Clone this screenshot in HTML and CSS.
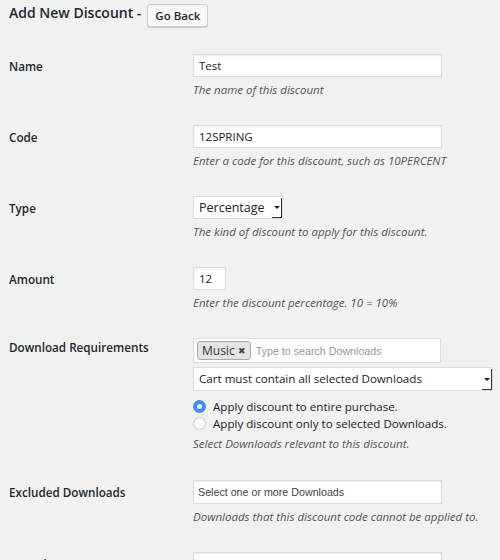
FILE: index.html
```html
<!DOCTYPE html>
<html lang="en">
  <head>
    <meta charset="UTF-8" />
    <meta name="viewport" content="width=device-width, initial-scale=1.0" />
    <title>Add New Discount</title>
    <link rel="stylesheet" href="styles.css">
  </head>
  <body>
    <div class="wrap">
      <div class="page-header">
        <h1>Add New Discount -</h1>
        <a class="button" href="#">Go Back</a>
      </div>

      <div class="form-table">
        <div class="row">
          <div class="label">Name</div>
          <div class="field">
            <div class="text-input">Test</div>
            <p class="description">The name of this discount</p>
          </div>
        </div>

        <div class="row">
          <div class="label">Code</div>
          <div class="field">
            <div class="text-input">12SPRING</div>
            <p class="description">Enter a code for this discount, such as 10PERCENT</p>
          </div>
        </div>

        <div class="row">
          <div class="label">Type</div>
          <div class="field">
            <div class="select select-type">
              <span class="select-text">Percentage</span>
              <span class="select-arrow"><span class="caret"></span></span>
            </div>
            <p class="description">The kind of discount to apply for this discount.</p>
          </div>
        </div>

        <div class="row">
          <div class="label">Amount</div>
          <div class="field">
            <div class="text-input small">12</div>
            <p class="description">Enter the discount percentage. 10 = 10%</p>
          </div>
        </div>

        <div class="row row-requirements">
          <div class="label">Download Requirements</div>
          <div class="field">
            <div class="tag-input">
              <span class="tag">Music <span class="tag-remove">&#10006;</span></span>
              <span class="placeholder">Type to search Downloads</span>
            </div>
            <div class="select select-wide">
              <span class="select-text">Cart must contain all selected Downloads</span>
              <span class="select-arrow"><span class="caret"></span></span>
            </div>
            <label class="radio"><span class="radio-dot checked"></span>Apply discount to entire purchase.</label>
            <label class="radio"><span class="radio-dot"></span>Apply discount only to selected Downloads.</label>
            <p class="description">Select Downloads relevant to this discount.</p>
          </div>
        </div>

        <div class="row">
          <div class="label">Excluded Downloads</div>
          <div class="field">
            <div class="text-input chosen">Select one or more Downloads</div>
            <p class="description">Downloads that this discount code cannot be applied to.</p>
          </div>
        </div>

        <div class="row">
          <div class="label">Start date</div>
          <div class="field">
            <div class="text-input"></div>
          </div>
        </div>
      </div>
    </div>
  </body>
</html>
```

FILE: styles.css
```css
* {
  box-sizing: border-box;
}
body {
  margin: 0;
  background-color: #f1f1f1;
  font-family: "Open Sans", Arial, sans-serif;
  color: #23282d;
  font-size: 11.5px;
}
.wrap {
  padding: 4px 9px 0;
}
.page-header {
  display: flex;
  align-items: center;
  gap: 6px;
  margin-bottom: 14px;
}
h1 {
  margin: 0;
  font-size: 14px;
  font-weight: 600;
  line-height: 20px;
  margin-top: -6px;
}
.button {
  display: inline-flex;
  align-items: center;
  height: 23px;
  padding: 0 7px;
  border: 1px solid #ccc;
  border-radius: 3px;
  background: #f7f7f7;
  box-shadow: 0 1px 0 #ccc;
  color: #23282d;
  font-size: 11.5px;
  font-weight: 600;
  text-decoration: none;
}
.row {
  display: grid;
  grid-template-columns: 184px 1fr;
  padding: 13px 0;
}
.row-requirements {
  padding-bottom: 14px;
}
.label {
  font-weight: 600;
  font-size: 11.7px;
  line-height: 18px;
  padding-top: 3px;
}
.row-requirements .label {
  padding-top: 0;
}
.field {
  display: flex;
  flex-direction: column;
  align-items: flex-start;
}
.text-input {
  width: 249px;
  height: 23px;
  line-height: 21px;
  padding: 0 5px;
  background: #fff;
  border: 1px solid #ddd;
  box-shadow: inset 0 1px 2px rgba(0, 0, 0, 0.07);
  color: #222;
  font-size: 11.5px;
}
.text-input.small {
  width: 33px;
}
.text-input.chosen {
  height: 24px;
  line-height: 22px;
  font-family: "Liberation Sans", Arial, sans-serif;
  font-size: 10.7px;
  color: #444;
  padding-left: 4px;
}
.description {
  margin: 4px 0 0;
  font-style: italic;
  font-size: 11.5px;
  line-height: 18px;
  color: #555;
}
.select {
  display: flex;
  align-items: stretch;
  height: 24px;
  background: #fff;
  border: 1px solid #ddd;
  color: #222;
}
.select-type {
  width: 90px;
  height: 23px;
  font-size: 12.5px;
}
.select-wide {
  width: 300px;
  margin-top: 4px;
  font-size: 11.6px;
}
.select-text {
  flex: 1;
  line-height: 21px;
  padding-left: 5px;
  white-space: nowrap;
}
.select-arrow {
  width: 10px;
  margin: 1px 0 0;
  border-right: 1px solid #333;
  border-bottom: 1px solid #333;
  display: flex;
  align-items: center;
  justify-content: center;
}
.caret {
  width: 0;
  height: 0;
  border-left: 3px solid transparent;
  border-right: 3px solid transparent;
  border-top: 3px solid #222;
}
.tag-input {
  display: flex;
  align-items: center;
  gap: 5px;
  width: 248px;
  height: 25px;
  padding: 0 3px;
  background: #fff;
  border: 1px solid #ddd;
}
.tag {
  display: inline-flex;
  align-items: center;
  gap: 3px;
  height: 19px;
  padding: 0 4px;
  background: #e4e4e4;
  border: 1px solid #aaa;
  border-radius: 3px;
  font-size: 12px;
  color: #333;
}
.tag-remove {
  font-size: 9px;
  color: #444;
}
.placeholder {
  font-family: "Liberation Sans", Arial, sans-serif;
  font-size: 10.7px;
  color: #999;
}
.radio {
  display: flex;
  align-items: center;
  gap: 7px;
  height: 17px;
  font-size: 11.6px;
  color: #222;
}
.radio:first-of-type {
  margin-top: 7px;
}
.radio-dot {
  width: 13px;
  height: 13px;
  border-radius: 50%;
  background: #fff;
  border: 1px solid #c4c4c4;
}
.radio-dot.checked {
  border: 4px solid #3d8ef4;
  background: #fff;
}
.radio + .description {
  margin-top: 3px;
}
```
